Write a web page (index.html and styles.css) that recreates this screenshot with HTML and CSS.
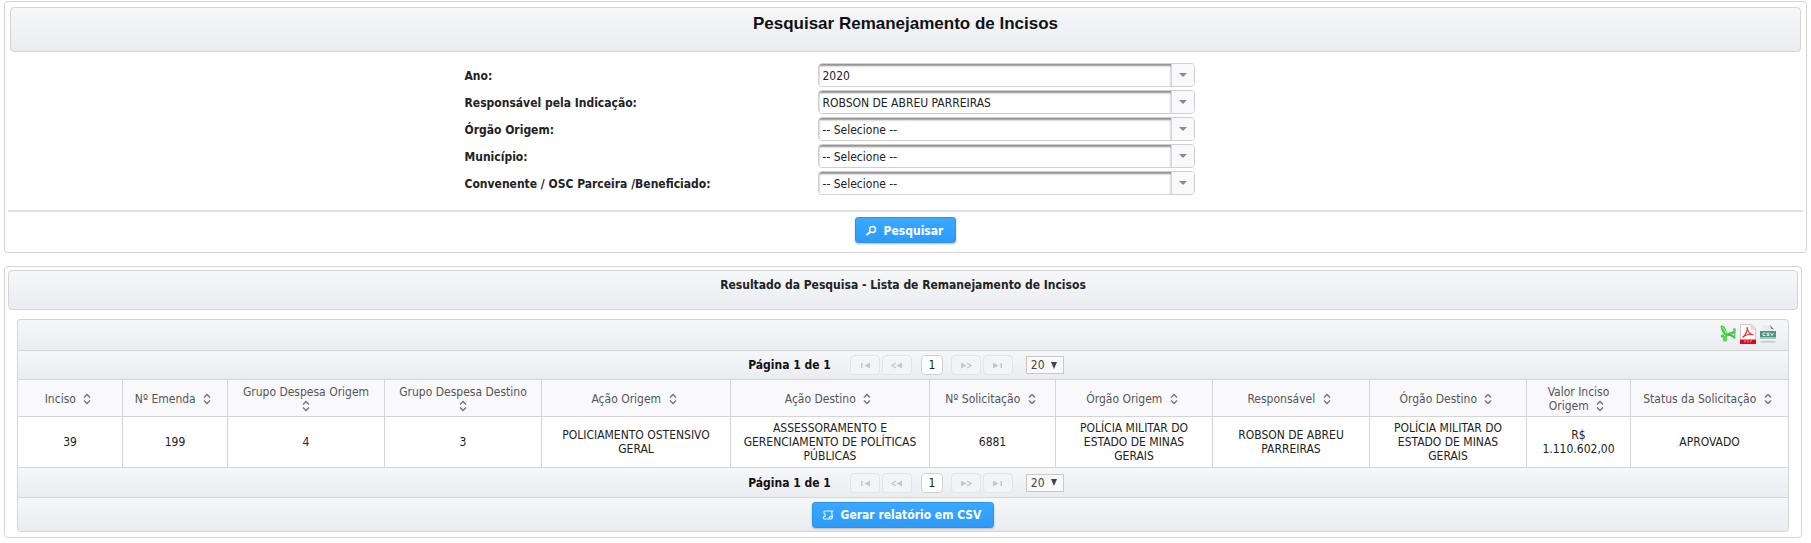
FILE: index.html
```html
<!DOCTYPE html>
<html lang="pt-BR">
<head>
<meta charset="utf-8">
<title>Pesquisar Remanejamento de Incisos</title>
<link rel="stylesheet" href="styles.css">
</head>
<body>
<svg class="sprite" aria-hidden="true">
  <symbol id="sort" viewBox="0 0 16 14"><path d="M5 5.500 8 2.500l3 3M5 8.500l3 3 3-3" fill="none" stroke="#777" stroke-width="1.500"/></symbol>
  <symbol id="first" viewBox="0 0 16 16"><path d="M4 6h1.500v5H4zM13 5.500v6L7.500 8.500z" fill="#c6c6c8"/></symbol>
  <symbol id="prev" viewBox="0 0 16 16"><path d="M7 6 3 8.500 7 11" fill="none" stroke="#c6c6c8" stroke-width="1.400"/><path d="M13 5.500v6L7.500 8.500z" fill="#c6c6c8"/></symbol>
  <symbol id="next" viewBox="0 0 16 16"><path d="M9 6l4 2.500L9 11" fill="none" stroke="#c6c6c8" stroke-width="1.400"/><path d="M3 5.500v6l5.500-3z" fill="#c6c6c8"/></symbol>
  <symbol id="last" viewBox="0 0 16 16"><path d="M10.500 6H12v5h-1.500zM3 5.500v6l5.500-3z" fill="#c6c6c8"/></symbol>
</svg>

<form class="panel search">
  <h1 class="panel-title">Pesquisar Remanejamento de Incisos</h1>
  <div class="fields">
    <label for="ano">Ano:</label>
    <div class="combo"><select id="ano"><option>2020</option></select><span class="trigger"></span></div>
    <label for="resp">Responsável pela Indicação:</label>
    <div class="combo"><select id="resp"><option>ROBSON DE ABREU PARREIRAS</option></select><span class="trigger"></span></div>
    <label for="orgao">Órgão Origem:</label>
    <div class="combo"><select id="orgao"><option>-- Selecione --</option></select><span class="trigger"></span></div>
    <label for="mun">Município:</label>
    <div class="combo"><select id="mun"><option>-- Selecione --</option></select><span class="trigger"></span></div>
    <label for="conv">Convenente / OSC Parceira /Beneficiado:</label>
    <div class="combo"><select id="conv"><option>-- Selecione --</option></select><span class="trigger"></span></div>
  </div>
  <div class="actions">
    <button type="button" class="primary">
      <svg width="16" height="16" viewBox="0 0 16 16" aria-hidden="true"><circle cx="9.500" cy="6.500" r="3" fill="none" stroke="#fff" stroke-width="1.500"/><path d="M7.200 9 3.500 12" stroke="#fff" stroke-width="2"/></svg>
      Pesquisar</button>
  </div>
</form>

<section class="panel results">
  <h2 class="panel-title">Resultado da Pesquisa - Lista de Remanejamento de Incisos</h2>
  <div class="datatable">
    <div class="bar exports">
      <button type="button" class="export" aria-label="Exportar XLS"><svg width="18" height="20" viewBox="0 0 18 20"><path d="M1.500 2c3-1.500 5.500 1.500 6.500 8L6.500 12C4 10 2 6 1.500 2z" fill="#2fd034"/><path d="M3 3c2 1.500 3.500 4 4 7" fill="none" stroke="#8cf08a" stroke-width="1.200"/><path d="M5.500 14.500 8 10.500 15.500 8" fill="none" stroke="#45d349" stroke-width="2.600" stroke-linecap="round"/><path d="M9.500 10.800c2.500 0 4.500 1 6 3" fill="none" stroke="#3fb54a" stroke-width="1.800" stroke-linecap="round"/><circle cx="3.500" cy="12" r="1.600" fill="#35c944"/><circle cx="6" cy="15.500" r="2.300" fill="#5ddc58"/><circle cx="15.500" cy="5.500" r="1.600" fill="#6fc977"/><path d="M15.500 6v7" stroke="#5dc766" stroke-width="1.600"/></svg></button>
      <button type="button" class="export" aria-label="Exportar PDF"><svg width="18" height="20" viewBox="0 0 18 20"><path d="M1.500.5H12l4.500 4.500v14.500h-15z" fill="#fff" stroke="#c9c9c9"/><path d="M12 .5V5h4.500z" fill="#e4e4e4" stroke="#c4c4c4" stroke-width=".6"/><path d="M1 15.500h16V20H1z" fill="#e2061c"/><path d="M8 3c.8 4-1.500 8-4.500 10.500C6 11 11 9.500 14.500 11 11.500 11 8.500 7.500 8 3z" fill="none" stroke="#e33" stroke-width="1.200"/><path d="M5.500 18.500v-2h1.500v1H5.500M8.500 16.500v2H9c1.500 0 1.500-2 0-2zM11.500 18.500v-2H13M11.500 17.500h1" fill="none" stroke="#f9a0a0" stroke-width=".5"/></svg></button>
      <button type="button" class="export" aria-label="Exportar CSV"><svg width="18" height="20" viewBox="0 0 18 20"><path d="M3.500 1h8L15 4.500V18h-12z" fill="#ececec"/><path d="M11 1l4 4.500-3-.7z" fill="#777"/><path d="M1 7h16v6.500H1z" fill="#4c9583"/><path d="M1 13.500h16v1.500H1z" fill="#a9c4bc"/><path d="M1.500 17h15v1.500h-15z" fill="#c9c9c9"/><path d="M6.500 9H4v2.500h2.500M10.500 9H8v1.200h2v1.300H7.800M11.700 9l1.300 2.700L14.500 9" fill="none" stroke="#d6ece5"/></svg></button>
    </div>
    <nav class="bar paginator" aria-label="Paginação superior">
      <strong class="current">Página 1 de 1</strong>
      <button type="button" disabled aria-label="Primeira"><svg><use href="#first"/></svg></button>
      <button type="button" disabled aria-label="Anterior"><svg><use href="#prev"/></svg></button>
      <button type="button" class="page">1</button>
      <button type="button" disabled aria-label="Próxima"><svg><use href="#next"/></svg></button>
      <button type="button" disabled aria-label="Última"><svg><use href="#last"/></svg></button>
      <div class="rows"><select aria-label="Linhas por página"><option>20</option></select></div>
    </nav>
    <table>
      <colgroup><col class="c-sm"><col class="c-sm"><col class="c-md"><col class="c-md"><col class="c-lg"><col class="c-xl"><col class="c-num"><col class="c-md"><col class="c-md"><col class="c-md"><col class="c-value"><col></colgroup>
      <thead><tr>
        <th>Inciso <svg><use href="#sort"/></svg></th>
        <th>Nº Emenda <svg><use href="#sort"/></svg></th>
        <th>Grupo Despesa Origem <svg><use href="#sort"/></svg></th>
        <th>Grupo Despesa Destino <svg><use href="#sort"/></svg></th>
        <th>Ação Origem <svg><use href="#sort"/></svg></th>
        <th>Ação Destino <svg><use href="#sort"/></svg></th>
        <th>Nº Solicitação <svg><use href="#sort"/></svg></th>
        <th>Órgão Origem <svg><use href="#sort"/></svg></th>
        <th>Responsável <svg><use href="#sort"/></svg></th>
        <th>Órgão Destino <svg><use href="#sort"/></svg></th>
        <th>Valor Inciso Origem <svg><use href="#sort"/></svg></th>
        <th>Status da Solicitação <svg><use href="#sort"/></svg></th>
      </tr></thead>
      <tbody><tr>
        <td>39</td><td>199</td><td>4</td><td>3</td>
        <td>POLICIAMENTO OSTENSIVO GERAL</td>
        <td>ASSESSORAMENTO E GERENCIAMENTO DE POLÍTICAS PÚBLICAS</td>
        <td>6881</td>
        <td>POLÍCIA MILITAR DO ESTADO DE MINAS GERAIS</td>
        <td>ROBSON DE ABREU PARREIRAS</td>
        <td>POLÍCIA MILITAR DO ESTADO DE MINAS GERAIS</td>
        <td>R$ 1.110.602,00</td>
        <td>APROVADO</td>
      </tr></tbody>
    </table>
    <nav class="bar paginator" aria-label="Paginação inferior">
      <strong class="current">Página 1 de 1</strong>
      <button type="button" disabled aria-label="Primeira"><svg><use href="#first"/></svg></button>
      <button type="button" disabled aria-label="Anterior"><svg><use href="#prev"/></svg></button>
      <button type="button" class="page">1</button>
      <button type="button" disabled aria-label="Próxima"><svg><use href="#next"/></svg></button>
      <button type="button" disabled aria-label="Última"><svg><use href="#last"/></svg></button>
      <div class="rows"><select aria-label="Linhas por página"><option>20</option></select></div>
    </nav>
    <div class="bar footer">
      <button type="button" class="primary">
        <svg width="16" height="16" viewBox="0 0 16 16" aria-hidden="true"><path d="M5 4h7.500c-1.500 1.500-.5 2.500-.5 4 .8 1.500.5 3-1 4H4.500c-1 0-1.500-1.500-.5-2.500h1.500M5 4C3.500 4.500 3.500 6.500 5 7v2.500M10 12c-1-.5-1-2 0-2.500h2" fill="none" stroke="#e6f3ff" stroke-width="1.200"/></svg>
        Gerar relatório em CSV</button>
    </div>
  </div>
</section>
</body>
</html>
```
FILE: styles.css
```css
* { box-sizing: border-box; }

body {
  margin: 0;
  padding: 1px 4px 5px;
  background: #fff;
  color: #222;
  font: 12px/14px "DejaVu Sans Condensed", "DejaVu Sans", sans-serif;
}

button, select { font: inherit; color: inherit; }

.sprite { display: none; }

.panel {
  border: 1px solid #d5d5d5;
  border-radius: 4px;
}

.search { padding: 5px; }

.results {
  margin: 13px 5px 0 0;
  padding: 3px 3px 5px;
}

.panel-title {
  margin: 0;
  border: 1px solid #d5d5d5;
  border-radius: 4px;
  background: linear-gradient(#f6f7f9, #ebecf0);
  text-align: center;
  font-weight: bold;
}

.search .panel-title {
  padding: 6px 10px 18px;
  color: #111;
  font-family: "Liberation Sans", Arial, sans-serif;
  font-size: 17px;
  line-height: 19px;
}

.results .panel-title {
  padding: 7px 10px 17px;
  font-size: 12px;
  line-height: 14px;
}

.fields {
  display: grid;
  grid-template-columns: 353px 377px;
  row-gap: 3px;
  align-items: center;
  width: 882px;
  max-width: 100%;
  margin: 11px auto 0;
}

.fields label {
  padding-top: 2px;
  font-weight: bold;
}

.combo {
  display: flex;
  height: 24px;
  border: 1px solid #cfcfcf;
  border-radius: 4px;
  overflow: hidden;
}

.combo select {
  flex: 1;
  appearance: none;
  border: 0;
  padding: 1px 4px 0;
  background: #fff;
  box-shadow: inset 0 2px 2px #8f8f8f;
}

.trigger {
  display: flex;
  align-items: center;
  justify-content: center;
  width: 23px;
  border-left: 1px solid #d5d5d5;
  background: #f9f9fb;
  pointer-events: none;
}

.trigger::after {
  content: "";
  border: 4px solid transparent;
  border-top-color: #888;
  border-bottom: 0;
}

.actions {
  margin: 15px -2px 0;
  padding: 5px 0 4px;
  border-top: 2px solid #e2e2e2;
  text-align: center;
}

.primary {
  display: inline-flex;
  align-items: center;
  gap: 5px;
  height: 26px;
  padding: 1px 12px 0 7px;
  border: 1px solid #2d93ea;
  border-radius: 3px;
  background: linear-gradient(#3aa8ff, #2c9bfc);
  box-shadow: 0 1px 2px #bbb;
  color: #fff;
  font-weight: bold;
  vertical-align: top;
}

.datatable { margin: 9px 9px 0; }

.bar {
  display: flex;
  align-items: center;
  justify-content: center;
  border: 1px solid #d5d5d5;
  border-bottom: 0;
  background: linear-gradient(#f6f7f9, #ebecf0);
}

.exports {
  justify-content: flex-end;
  gap: 2px;
  height: 31px;
  padding: 0 11px 2px;
  border-radius: 4px 4px 0 0;
}

.export {
  display: block;
  padding: 0;
  border: 0;
  background: none;
}

.export svg { display: block; }

.paginator {
  height: 29px;
  padding-left: 6px;
}

.paginator .current {
  margin-right: 19px;
  color: #111;
}

.paginator button {
  display: flex;
  align-items: center;
  justify-content: center;
  width: 30px;
  height: 20px;
  margin-right: 2px;
  padding: 0;
  border: 1px solid #e4e4e7;
  border-radius: 4px;
  background: #f3f4f6;
}

.paginator svg { width: 16px; height: 16px; }

.paginator .page {
  width: 22px;
  margin: 0 8px 0 7px;
  border-color: #d0d0d0;
  background: #fff;
}

.rows {
  display: flex;
  align-items: center;
  width: 38px;
  height: 18px;
  margin-left: 11px;
  border: 1px solid #c8c8c8;
  background: #f9f9fb;
}

.rows select {
  appearance: none;
  flex: 1;
  min-width: 0;
  height: 16px;
  padding: 0 0 0 4px;
  border: 0;
  background: none;
  color: #444;
}

.rows::after {
  content: "";
  margin-right: 6px;
  border: 3px solid transparent;
  border-top: 7px solid #444;
  border-bottom: 0;
}

table {
  width: 100%;
  table-layout: fixed;
  border-collapse: collapse;
}

.c-sm { width: 105px; }
.c-md { width: 157px; }
.c-lg { width: 189px; }
.c-xl { width: 199px; }
.c-num { width: 126px; }
.c-value { width: 104px; }

th, td {
  border: 1px solid #d5d5d5;
  text-align: center;
  vertical-align: middle;
}

th {
  height: 37px;
  padding: 4px 10px 3px;
  background: #f9f9fc;
  color: #555;
  font-weight: normal;
}

th svg {
  width: 16px;
  height: 14px;
  vertical-align: -3px;
}

td {
  height: 51px;
  padding: 4px 10px;
}

table + .paginator {
  border-top: 0;
}

.footer {
  height: 35px;
  border-bottom: 1px solid #d5d5d5;
  border-radius: 0 0 4px 4px;
}
```
